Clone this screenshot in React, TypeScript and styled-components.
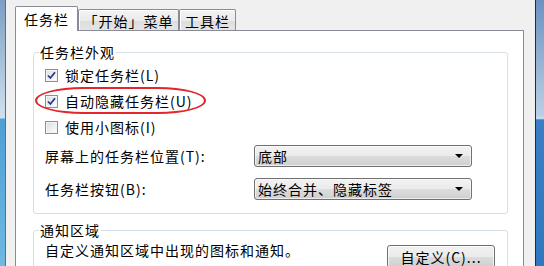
import React from 'react';
import styled, { createGlobalStyle } from 'styled-components';

const GlobalStyle = createGlobalStyle`
  html, body {
    margin: 0;
    padding: 0;
    width: 544px;
    height: 266px;
    overflow: hidden;
    background: #f0f0f0;
  }
  body {
    font-family: "Noto Sans CJK SC", "Noto Sans", sans-serif;
    font-size: 14px;
    letter-spacing: 1px;
    color: #000;
  }
`;

const Screen = styled.div`
  display: flex;
  width: 544px;
  height: 266px;
  overflow: hidden;
`;

const LeftEdge = styled.div`
  width: 5px;
  border-right: 1px solid #5a6e84;
  background: linear-gradient(
    to bottom,
    #7c9ec2 0px,
    #cfe1ef 118px,
    #4e9fd6 119px,
    #6fb9e2 266px
  );
`;

const RightEdge = styled.div`
  width: 8px;
  border-left: 1px solid #1e2c3c;
  background: linear-gradient(
    to bottom,
    #6a93c3 0px,
    #bcd0e6 117px,
    #e4eef8 118px,
    #3a7fc5 120px,
    #2f78c0 266px
  );
`;

const Dialog = styled.div`
  flex: 1;
  display: flex;
  flex-direction: column;
  padding: 6px 11px 0 9px;
  background: #f0f0f0;
`;

const TabBar = styled.div`
  display: flex;
  align-items: flex-end;
  height: 25px;
`;

const Tab = styled.div<{ $active?: boolean; $width: number }>`
  position: relative;
  z-index: ${(p) => (p.$active ? 2 : 0)};
  box-sizing: border-box;
  width: ${(p) => p.$width}px;
  height: ${(p) => (p.$active ? 25 : 22)}px;
  display: flex;
  align-items: center;
  justify-content: center;
  padding-top: ${(p) => (p.$active ? 0 : 1)}px;
  border: 1px solid #898c95;
  border-bottom: none;
  border-radius: 2px 2px 0 0;
  background: ${(p) =>
    p.$active
      ? '#ffffff'
      : 'linear-gradient(to bottom, #f3f3f3 0%, #ebebeb 50%, #dddddd 51%, #e6e6e6 100%)'};
  box-shadow: ${(p) => (p.$active ? 'none' : 'inset 1px 1px 0 #ffffff')};
  white-space: nowrap;
`;

const Panel = styled.div`
  position: relative;
  z-index: 1;
  flex: 1;
  overflow: hidden;
  margin-top: -1px;
  padding: 13px 15px 0 17px;
  background: #ffffff;
  border: 1px solid #898c95;
  border-bottom: none;
`;

const Group = styled.fieldset<{ $gap?: number }>`
  margin: 0 0 ${(p) => p.$gap ?? 0}px 0;
  padding: 0 12px 0 11px;
  border: 1px solid #d5dfe5;
  border-radius: 3px;
  min-width: 0;
`;

const Legend = styled.legend`
  margin-left: -6px;
  padding: 0 1px;
  line-height: 16px;
  height: 16px;
`;

const CheckRow = styled.label`
  position: relative;
  display: flex;
  align-items: center;
  gap: 7px;
  height: 26px;
  &:first-of-type {
    margin-top: 2px;
  }
`;

const Box = styled.span`
  box-sizing: border-box;
  width: 13px;
  height: 13px;
  flex: none;
  border: 1px solid #8e8f8f;
  background: linear-gradient(135deg, #dcdcdc 0%, #f4f4f4 70%, #ffffff 100%);
  box-shadow: inset 0 0 0 1px #f4f4f4;
  display: flex;
  align-items: center;
  justify-content: center;
`;

const Highlight = styled.span`
  position: absolute;
  left: -10px;
  top: -1px;
  width: 171px;
  height: 27px;
  box-sizing: border-box;
  border: 2px solid #e3262c;
  border-radius: 50px / 14px;
  pointer-events: none;
`;

const SelectRow = styled.div<{ $top: number; $bottom?: number }>`
  display: flex;
  align-items: center;
  height: 22px;
  margin-top: ${(p) => p.$top}px;
  margin-bottom: ${(p) => p.$bottom ?? 0}px;
`;

const FieldLabel = styled.span`
  width: 209px;
  flex: none;
`;

const Select = styled.div`
  box-sizing: border-box;
  width: 218px;
  height: 22px;
  display: flex;
  align-items: center;
  justify-content: space-between;
  padding: 0 8px 0 3px;
  border: 1px solid #707070;
  border-radius: 3px;
  background: linear-gradient(to bottom, #f2f2f2 0%, #ebebeb 50%, #dddddd 51%, #cfcfcf 100%);
  box-shadow: inset 0 0 0 1px rgba(255, 255, 255, 0.6);
`;

const Arrow = styled.span`
  width: 0;
  height: 0;
  border-left: 4px solid transparent;
  border-right: 4px solid transparent;
  border-top: 4px solid #000;
`;

const NotifyRow = styled.div`
  display: flex;
  justify-content: space-between;
  align-items: flex-start;
  padding: 4px 0 20px;
  line-height: 16px;
`;

const Button = styled.button`
  box-sizing: border-box;
  width: 108px;
  height: 23px;
  margin-top: 3px;
  padding: 0;
  font: inherit;
  letter-spacing: inherit;
  color: #000;
  border: 1px solid #707070;
  border-radius: 3px;
  background: linear-gradient(to bottom, #f2f2f2 0%, #ebebeb 50%, #dddddd 51%, #cfcfcf 100%);
  box-shadow: inset 0 0 0 1px rgba(255, 255, 255, 0.7);
`;

const Check = () => (
  <svg width="9" height="9" viewBox="0 0 9 9">
    <path d="M1 4.5 L3.4 7 L8 1.2" fill="none" stroke="#26388f" strokeWidth="1.8" />
  </svg>
);

const CheckItem: React.FC<{ checked?: boolean; text: string; marked?: boolean }> = ({
  checked,
  text,
  marked,
}) => (
  <CheckRow>
    <Box>{checked && <Check />}</Box>
    <span>{text}</span>
    {marked && <Highlight />}
  </CheckRow>
);

export default function App() {
  return (
    <>
      <GlobalStyle />
      <Screen>
        <LeftEdge />
        <Dialog>
          <TabBar>
            <Tab $active $width={63}>任务栏</Tab>
            <Tab $width={101}>「开始」菜单</Tab>
            <Tab $width={57}>工具栏</Tab>
          </TabBar>
          <Panel>
            <Group $gap={8}>
              <Legend>任务栏外观</Legend>
              <CheckItem checked text="锁定任务栏(L)" />
              <CheckItem checked marked text="自动隐藏任务栏(U)" />
              <CheckItem text="使用小图标(I)" />
              <SelectRow $top={5}>
                <FieldLabel>屏幕上的任务栏位置(T):</FieldLabel>
                <Select>
                  <span>底部</span>
                  <Arrow />
                </Select>
              </SelectRow>
              <SelectRow $top={11} $bottom={13}>
                <FieldLabel>任务栏按钮(B):</FieldLabel>
                <Select>
                  <span>始终合并、隐藏标签</span>
                  <Arrow />
                </Select>
              </SelectRow>
            </Group>
            <Group>
              <Legend>通知区域</Legend>
              <NotifyRow>
                <span>自定义通知区域中出现的图标和通知。</span>
                <Button>自定义(C)...</Button>
              </NotifyRow>
            </Group>
          </Panel>
        </Dialog>
        <RightEdge />
      </Screen>
    </>
  );
}
